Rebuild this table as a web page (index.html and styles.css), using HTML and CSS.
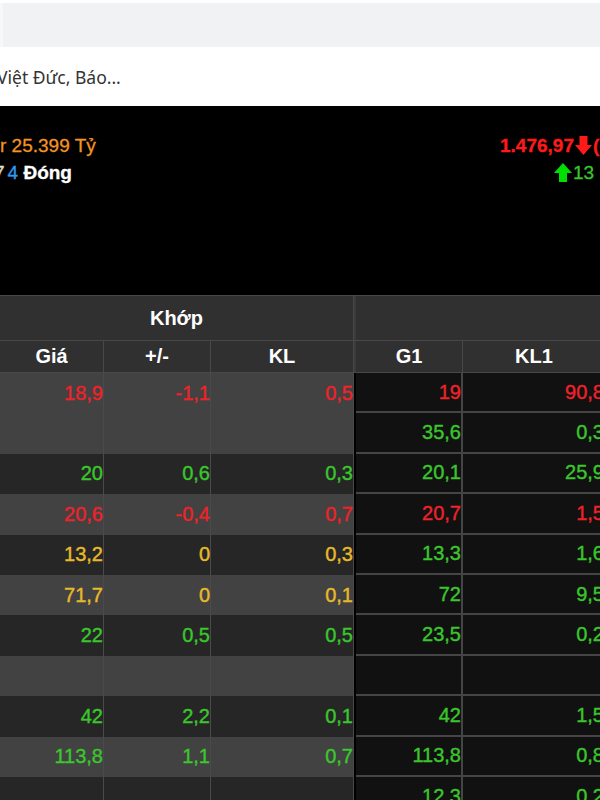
FILE: index.html
```html
<!DOCTYPE html>
<html lang="vi">
<head>
  <meta charset="UTF-8" />
  <meta name="viewport" content="width=device-width, initial-scale=1" />
  <title>Bảng giá</title>
  <link rel="stylesheet" href="styles.css">
</head>
<body>
  <div class="topbar">
    <div class="search"></div>
  </div>

  <div class="suggest">
    <span>Việt Đức, Báo...</span>
  </div>

  <div class="summary">
    <div class="sum-left">
      <div class="line"><span class="orange">r 25.399 Tỷ</span></div>
      <div class="line"><span class="cut">7</span><span class="blue">4</span> <b class="white">Đóng</b></div>
    </div>
    <div class="sum-right">
      <div class="line red strong">1.476,97<svg class="arrow" width="17" height="19" viewBox="0 0 17 19"><path d="M4.5 0h8v9h4.5l-8.5 10L0 9h4.5z" fill="#ff1a1a"/></svg>(-0,58%)</div>
      <div class="line green second"><svg class="arrow" width="18" height="19" viewBox="0 0 18 19"><path d="M5 19h8v-9h5L9 0 0 10h5z" fill="#00e000"/></svg>13 <span class="red">5</span></div>
    </div>
  </div>

  <div class="board">
    <div class="row head head-1">
      <div class="th span-left">Khớp</div>
      <div class="th gap"></div>
      <div class="th span-right"></div>
    </div>
    <div class="row head head-2">
      <div class="th">Giá</div>
      <div class="th">+/-</div>
      <div class="th">KL</div>
      <div class="th gap"></div>
      <div class="th">G1</div>
      <div class="th">KL1</div>
    </div>

    <div class="row light">
      <div class="td red">18,9</div><div class="td red">-1,1</div><div class="td red">0,5</div>
      <div class="sep"></div>
      <div class="cell red">19</div><div class="cell red">90,8</div>
    </div>
    <div class="row light">
      <div class="td"></div><div class="td"></div><div class="td"></div>
      <div class="sep"></div>
      <div class="cell green">35,6</div><div class="cell green">0,3</div>
    </div>
    <div class="row dark">
      <div class="td green">20</div><div class="td green">0,6</div><div class="td green">0,3</div>
      <div class="sep"></div>
      <div class="cell green">20,1</div><div class="cell green">25,9</div>
    </div>
    <div class="row light">
      <div class="td red">20,6</div><div class="td red">-0,4</div><div class="td red">0,7</div>
      <div class="sep"></div>
      <div class="cell red">20,7</div><div class="cell red">1,5</div>
    </div>
    <div class="row dark">
      <div class="td yellow">13,2</div><div class="td yellow">0</div><div class="td yellow">0,3</div>
      <div class="sep"></div>
      <div class="cell green">13,3</div><div class="cell green">1,6</div>
    </div>
    <div class="row light">
      <div class="td yellow">71,7</div><div class="td yellow">0</div><div class="td yellow">0,1</div>
      <div class="sep"></div>
      <div class="cell green">72</div><div class="cell green">9,5</div>
    </div>
    <div class="row dark">
      <div class="td green">22</div><div class="td green">0,5</div><div class="td green">0,5</div>
      <div class="sep"></div>
      <div class="cell green">23,5</div><div class="cell green">0,2</div>
    </div>
    <div class="row light">
      <div class="td"></div><div class="td"></div><div class="td"></div>
      <div class="sep"></div>
      <div class="cell"></div><div class="cell"></div>
    </div>
    <div class="row dark">
      <div class="td green">42</div><div class="td green">2,2</div><div class="td green">0,1</div>
      <div class="sep"></div>
      <div class="cell green">42</div><div class="cell green">1,5</div>
    </div>
    <div class="row light">
      <div class="td green">113,8</div><div class="td green">1,1</div><div class="td green">0,7</div>
      <div class="sep"></div>
      <div class="cell green">113,8</div><div class="cell green">0,8</div>
    </div>
    <div class="row dark">
      <div class="td"></div><div class="td"></div><div class="td"></div>
      <div class="sep"></div>
      <div class="cell green">12,3</div><div class="cell green">0,2</div>
    </div>
  </div>
</body>
</html>
```

FILE: styles.css
```css
* {
  box-sizing: border-box;
}

html, body {
  margin: 0;
  padding: 0;
  width: 600px;
  height: 800px;
  overflow: hidden;
  background-color: #000;
  font-family: "Liberation Sans", Arial, sans-serif;
}

/* top search strip */
.topbar {
  height: 47px;
  padding-top: 3px;
  background-color: #fff;
}

.search {
  height: 44px;
  background-color: #f1f2f4;
  border-left: 3px solid #f8f8f9;
}

.suggest {
  height: 59px;
  display: flex;
  align-items: center;
  background-color: #fff;
  color: #333;
  font-family: "Noto Sans", "Open Sans", sans-serif;
  font-size: 17.5px;
  white-space: nowrap;
}

.suggest span {
  margin-left: -3px;
}

/* market summary */
.summary {
  height: 189px;
  padding-top: 26px;
  display: flex;
  white-space: nowrap;
}

.sum-left {
  flex: none;
  width: 500px;
}

.sum-right {
  flex: none;
  width: 100px;
}

.line {
  height: 27px;
  line-height: 27px;
  font-size: 19px;
  -webkit-text-stroke: 0.3px currentColor;
}

.line.second {
  padding-left: 53px;
}

.arrow {
  vertical-align: -3px;
  margin: 0 1px;
}

.strong {
  font-weight: bold;
}

.orange { color: #f39323; }
.blue { color: #2f9bf0; }
.white { color: #fff; }

.cut {
  display: inline-block;
  margin-left: -6px;
  margin-right: 3px;
  color: #e8e0d0;
}

/* price board */
.board {
  width: 620px;
  border-top: 1px solid #484848;
}

.row {
  display: grid;
  grid-template-columns: 104px 107px 143px 2px 107px 143px;
}

.head {
  background-color: #303030;
  color: #fff;
  font-weight: bold;
  font-size: 20px;
}

.head-1 {
  height: 45px;
}

.head-2 {
  height: 32px;
}

.th {
  display: flex;
  align-items: center;
  justify-content: center;
  border-right: 1px solid #484848;
  border-bottom: 1px solid #484848;
}

.th.gap {
  background-color: #3a3a3a;
  border-right: none;
}

.span-left {
  grid-column: 1 / 4;
}

.span-right {
  grid-column: 5 / 7;
}

.row.light,
.row.dark {
  height: 40.4px;
  font-size: 20px;
  -webkit-text-stroke: 0.4px currentColor;
}

.light .td { background-color: #424242; }
.dark .td { background-color: #262626; }

.td,
.cell {
  display: flex;
  align-items: center;
  justify-content: flex-end;
}

.td {
  border-right: 1px solid #4a4a4a;
}

.sep {
  background-color: #000;
}

.cell {
  background-color: #111;
  border-right: 2px solid #454545;
  border-bottom: 2px solid #454545;
}

.red { color: #ee2229; }
.green { color: #3ac62c; }
.yellow { color: #e8b92a; }

.sum-right .red.strong { color: #ff1a1a; }
```
